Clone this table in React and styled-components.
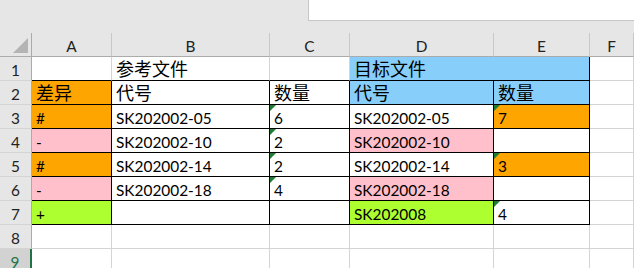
import React from 'react';
import styled, { createGlobalStyle, css } from 'styled-components';

const GlobalStyle = createGlobalStyle`
  html, body {
    margin: 0;
    padding: 0;
    background: #fff;
    overflow: hidden;
  }
  body {
    font-family: "Lato", "Noto Sans CJK SC", sans-serif;
  }
`;

const GRID = '#d4d4d4';
const HEAD = '#e6e6e6';
const XL_GREEN = '#217346';

const columns = ['A', 'B', 'C', 'D', 'E', 'F'];

// one entry per row: [text, fill, flag, span]; null = empty default cell
const sheet = [
  [null, ['参考文件'], null, ['目标文件', 'lightskyblue', false, 2], null],
  [['差异', 'orange'], ['代号'], ['数量'], ['代号', 'lightskyblue'], ['数量', 'lightskyblue']],
  [['#', 'orange'], ['SK202002-05'], ['6', null, true], ['SK202002-05'], ['7', 'orange', true]],
  [['-', 'pink'], ['SK202002-10'], ['2', null, true], ['SK202002-10', 'pink'], null],
  [['#', 'orange'], ['SK202002-14'], ['2', null, true], ['SK202002-14'], ['3', 'orange', true]],
  [['-', 'pink'], ['SK202002-18'], ['4', null, true], ['SK202002-18', 'pink'], null],
  [['+', 'greenyellow'], null, null, ['SK202008', 'greenyellow'], ['4', null, true]],
  [null, null, null, null, null],
  [null, null, null, null, null],
];

const isHan = (s) => /[\u4e00-\u9fff]/.test(s);

export default function App() {
  return (
    <Frame>
      <GlobalStyle />
      <FormulaStrip>
        <FormulaBox />
      </FormulaStrip>
      <Sheet>
        <Corner>
          <CornerMark />
        </Corner>
        {columns.map((c) => (
          <ColHead key={c}>{c}</ColHead>
        ))}

        {sheet.map((row, r) => {
          const n = r + 1;
          const table = n <= 7;
          const cells = [];
          row.forEach((cell, i) => {
            if (r === 0 && i === 4) return; // covered by merged D1:E1
            const [text, fill, flag, span] = cell || [];
            let edge = false;
            let base = false;
            if (n === 1) {
              base = true;
              edge = span === 2;
            } else if (table) {
              edge = true;
              base = true;
            }
            cells.push(
              <Cell
                key={i}
                $fill={fill}
                $edge={edge}
                $base={base}
                $flag={flag}
                $span={span}
              >
                {text && (isHan(text) ? <Han>{text}</Han> : text)}
              </Cell>
            );
          });
          return (
            <React.Fragment key={n}>
              <RowHead $active={n === 9}>{n}</RowHead>
              {cells}
              <Cell />
            </React.Fragment>
          );
        })}
      </Sheet>
    </Frame>
  );
}

const Frame = styled.div`
  width: 634px;
  height: 268px;
  overflow: hidden;
  background: #fff;
  font-size: 15.4px;
  color: #000;
`;

const FormulaStrip = styled.div`
  height: 33px;
  background: ${HEAD};
  display: flex;
  justify-content: flex-end;
  align-items: flex-start;
`;

const FormulaBox = styled.div`
  width: 325px;
  height: 20px;
  background: #fff;
  border-left: 1px solid #c6c6c6;
  border-bottom: 1px solid #c6c6c6;
`;

const Sheet = styled.div`
  display: grid;
  grid-template-columns: 32px 80px 158px 80px 144px 96px 1fr;
  grid-auto-rows: 24px;
`;

const headText = css`
  box-sizing: border-box;
  background: ${HEAD};
  color: #222;
  display: flex;
  justify-content: center;
  line-height: 23px;
  padding-top: 2px;
`;

const Corner = styled.div`
  box-sizing: border-box;
  background: ${HEAD};
  border-right: 1px solid #ababab;
  border-bottom: 1px solid #ababab;
  display: flex;
  justify-content: flex-end;
  align-items: flex-end;
  padding: 0 3px 3px 0;
`;

const CornerMark = styled.div`
  width: 0;
  height: 0;
  border-bottom: 15px solid #b4b4b4;
  border-left: 15px solid transparent;
`;

const ColHead = styled.div`
  ${headText};
  border-right: 1px solid #c8c8c8;
  border-bottom: 1px solid #ababab;
`;

const RowHead = styled.div`
  ${headText};
  border-bottom: 1px solid ${GRID};
  border-right: ${(p) => (p.$active ? `2px solid ${XL_GREEN}` : '1px solid #ababab')};
  background: ${(p) => (p.$active ? '#d2d2d2' : HEAD)};
  color: ${(p) => (p.$active ? XL_GREEN : '#222')};
`;

const Cell = styled.div`
  position: relative;
  box-sizing: border-box;
  grid-column: ${(p) => (p.$span ? `span ${p.$span}` : 'auto')};
  background: ${(p) => p.$fill || '#fff'};
  border-right: 1px solid ${(p) => (p.$edge ? '#000' : GRID)};
  border-bottom: 1px solid ${(p) => (p.$base ? '#000' : GRID)};
  padding: 2px 0 0 4px;
  line-height: 23px;
  white-space: nowrap;

  ${(p) =>
    p.$flag &&
    css`
      &::before {
        content: '';
        position: absolute;
        top: 0;
        left: 0;
        border-top: 6px solid #1e7b34;
        border-right: 6px solid transparent;
      }
    `}
`;

const Han = styled.span`
  font-family: "Noto Sans CJK SC", sans-serif;
  font-size: 18px;
  line-height: 1;
`;
